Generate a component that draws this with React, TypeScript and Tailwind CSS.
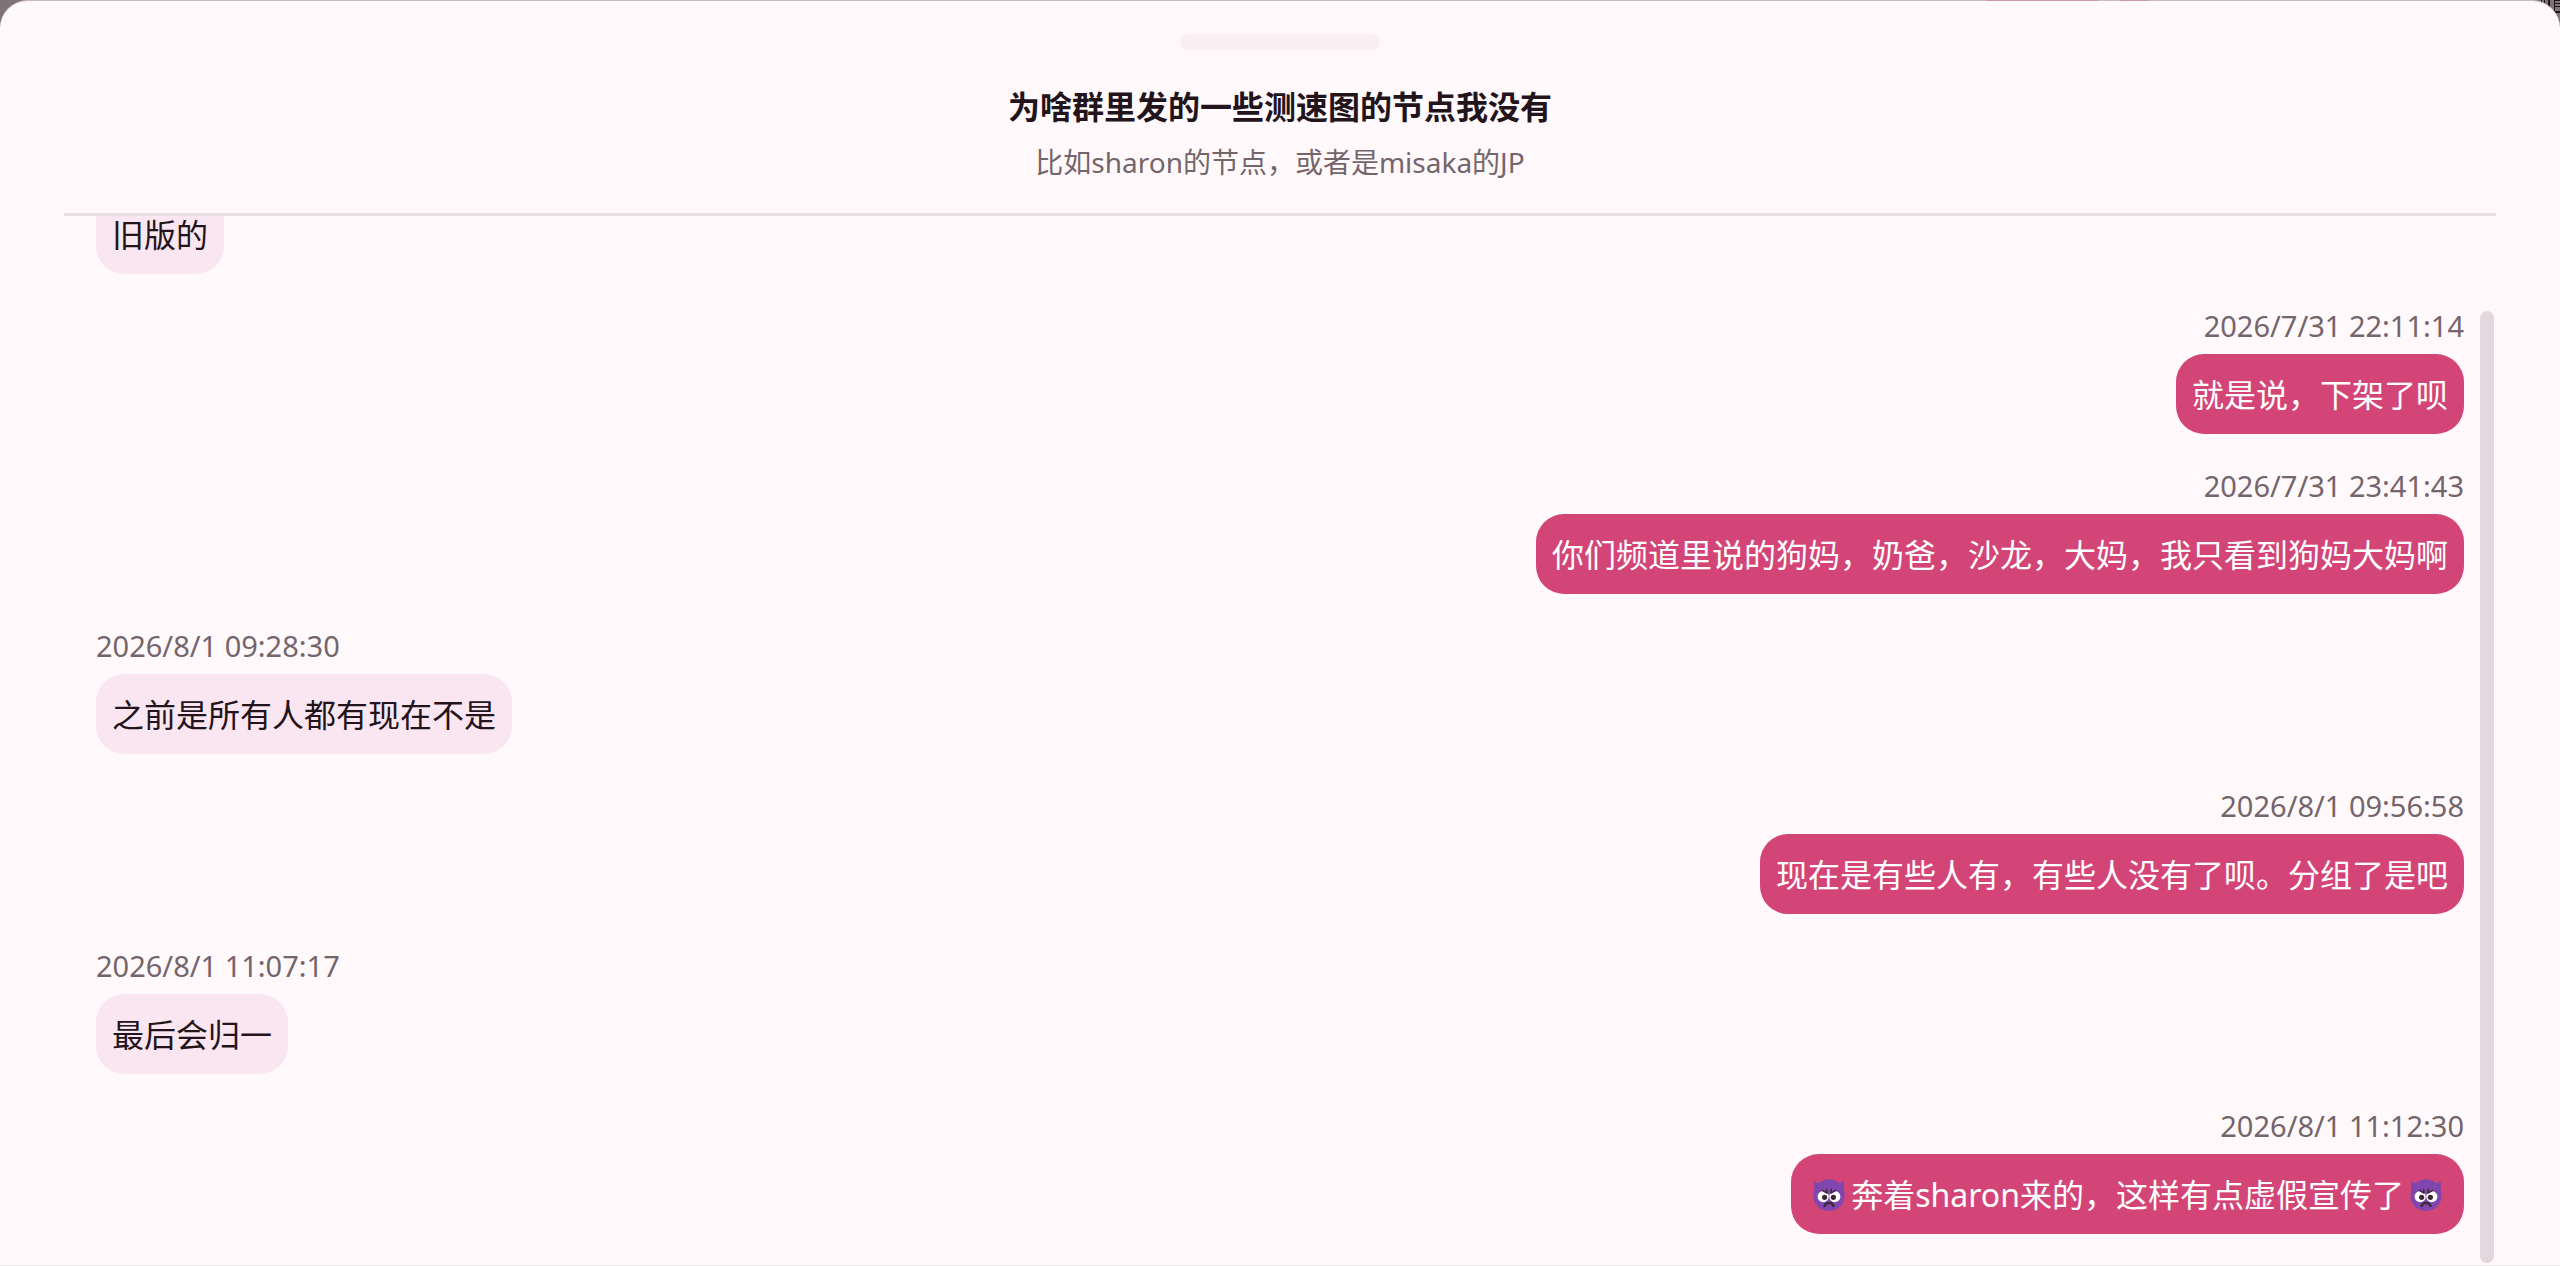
import clsx from "clsx";
import type { ReactNode } from "react";

interface IMessage {
  id: number;
  time?: string;
  mine: boolean;
  content: ReactNode;
}

const ImpIcon = () => (
  <svg
    viewBox="0 0 32 32"
    className="mx-1.5 inline-block size-8 align-[-4px]"
    role="img"
    aria-label="👿"
  >
    <path
      fill="#8146ad"
      d="M1.8 1.2c1 1.700 2.300 2.700 3.900 3A16 16 0 0 1 16 .3a16 16 0 0 1 10.300 3.900c1.600-.3 2.900-1.300 3.900-3 .9 3 1 6 .4 9.300.7 2 1 3.800 1 6C31.600 25.500 25 31.900 16 31.900S.4 25.500.4 16.500c0-2.200.3-4 1-6-.6-3.300-.5-6.300.4-9.300z"
    />
    <circle cx="10.200" cy="17.600" r="5.600" fill="#fff" />
    <circle cx="21.800" cy="17.600" r="5.600" fill="#fff" />
    <path fill="#8146ad" d="M9 11l5 3.200h4l5-3.200-3-2h-8z" />
    <circle cx="11.600" cy="18.300" r="2.600" fill="#3b2a33" />
    <circle cx="20.400" cy="18.300" r="2.600" fill="#3b2a33" />
    <path
      fill="none"
      stroke="#3b2a33"
      strokeWidth="1.400"
      strokeLinecap="round"
      strokeLinejoin="round"
      d="M9.300 11.300l4.600 2.900-.2-4M22.700 11.300l-4.600 2.900.2-4"
    />
    <path
      fill="none"
      stroke="#3b2a33"
      strokeWidth="2.400"
      strokeLinecap="round"
      d="M11.500 27c1.800-4.200 7.200-4.200 9 0"
    />
  </svg>
);

// page content still visible behind the rounded corner of the sheet
const Backdrop = () => (
  <svg
    viewBox="0 0 20 26"
    className="absolute top-0 right-0 h-6.5 w-5"
    aria-hidden="true"
  >
    <path
      stroke="#1d1719"
      d="M1.500 0v5M4.500 0v8M8.500 0v12M9.500 0v12M14.500 0v13M15 .5h5M15 3.500h5M15 6.500h5"
    />
    <path stroke="#1d1719" strokeWidth="2" d="M14 12h6" />
  </svg>
);

const messages: IMessage[] = [
  { id: 1, mine: false, content: "旧版的" },
  { id: 2, time: "2026/7/31 22:11:14", mine: true, content: "就是说，下架了呗" },
  {
    id: 3,
    time: "2026/7/31 23:41:43",
    mine: true,
    content: "你们频道里说的狗妈，奶爸，沙龙，大妈，我只看到狗妈大妈啊",
  },
  {
    id: 4,
    time: "2026/8/1 09:28:30",
    mine: false,
    content: "之前是所有人都有现在不是",
  },
  {
    id: 5,
    time: "2026/8/1 09:56:58",
    mine: true,
    content: "现在是有些人有，有些人没有了呗。分组了是吧",
  },
  { id: 6, time: "2026/8/1 11:07:17", mine: false, content: "最后会归一" },
  {
    id: 7,
    time: "2026/8/1 11:12:30",
    mine: true,
    content: (
      <>
        <ImpIcon />
        奔着sharon来的，这样有点虚假宣传了
        <ImpIcon />
      </>
    ),
  },
];

const Message = ({ time, mine, content }: Omit<IMessage, "id">) => (
  <li
    className={clsx(
      "flex shrink-0 flex-col",
      mine ? "items-end" : "items-start",
    )}
  >
    {time && (
      <time className="mb-2 text-[29px] leading-10 text-[#74656b]">
        {time}
      </time>
    )}
    <p
      className={clsx(
        "rounded-[28px] px-4 pt-[17px] pb-[15px] text-[32px] leading-12",
        mine ? "bg-[#d44577] text-white" : "bg-[#fae6f1] text-[#22141a]",
      )}
    >
      {content}
    </p>
  </li>
);

export default function App() {
  return (
    <div className="relative h-screen bg-[#807378] font-['Noto_Sans','Noto_Sans_CJK_SC',sans-serif]">
      <Backdrop />
      <main
        role="dialog"
        aria-labelledby="topic-title"
        className="relative flex h-full flex-col rounded-t-[28px] border-t border-b border-t-[#c8b8c0] border-b-[#e9e6e8] bg-[#fff9fc] px-16"
      >
        <div className="absolute -top-px right-[412px] flex h-px gap-5.5">
          <div className="w-28 bg-[#cb97ab]" />
          <div className="w-7 bg-[#cb97ab]" />
        </div>
        <header className="flex shrink-0 flex-col items-center border-b-3 border-[#ebdfe7] pt-[33px] pb-[29px]">
          <div className="h-4 w-50 rounded-full bg-[#f9eff3]" />
          <h1
            id="topic-title"
            className="mt-[33px] text-[32px] leading-12 font-bold text-[#22141a]"
          >
            为啥群里发的一些测速图的节点我没有
          </h1>
          <p className="mt-[9px] text-[28px] leading-11 text-[#74656b]">
            比如sharon的节点，或者是misaka的JP
          </p>
        </header>
        <section className="relative flex min-h-0 flex-1 flex-col">
          <ul className="flex min-h-0 flex-1 flex-col justify-end gap-8 overflow-hidden px-8 pb-[31px]">
            {messages.map(({ id, ...message }) => (
              <Message key={id} {...message} />
            ))}
          </ul>
          <div className="absolute top-[95px] right-0.5 bottom-0.5 w-3.5 rounded-full bg-[#e5d7de]" />
        </section>
      </main>
    </div>
  );
}
